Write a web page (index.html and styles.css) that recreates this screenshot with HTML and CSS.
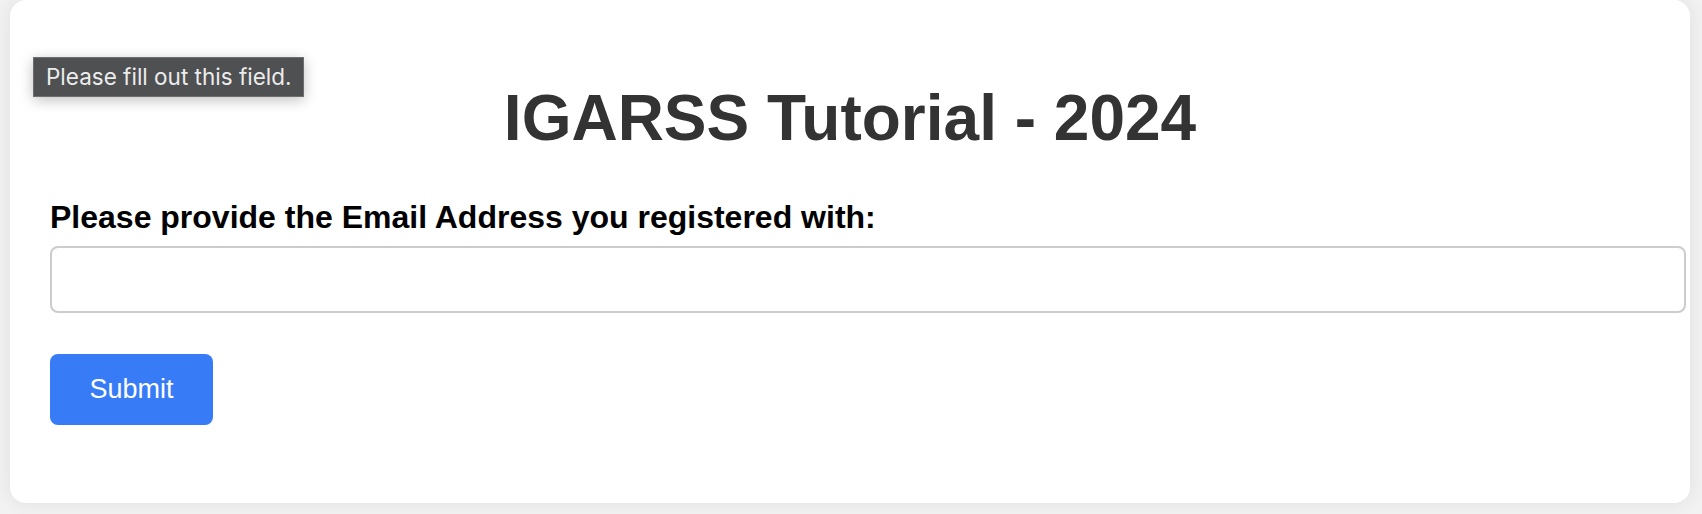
FILE: index.html
```html
<!DOCTYPE html>
<html lang="en">
<head>
<meta charset="utf-8">
<title>IGARSS Tutorial - 2024</title>
<link rel="stylesheet" href="styles.css">
</head>
<body>
<main class="card">
  <h1 class="title">IGARSS Tutorial - 2024</h1>
  <form class="form">
    <label class="label" for="email">Please provide the Email Address you registered with:</label>
    <input class="input" id="email" type="email" required>
    <button class="submit" type="button">Submit</button>
  </form>
</main>
<div class="tooltip">Please fill out this field.</div>
</body>
</html>
```

FILE: styles.css
```css
html, body {
  margin: 0;
  padding: 0;
  background: #f2f2f2;
  height: 100%;
  overflow: hidden;
}
body {
  font-family: "Liberation Sans", Arial, sans-serif;
  padding: 0 12px 0 10px;
}
.card {
  box-sizing: border-box;
  width: 1680px;
  height: 503px;
  background: #ffffff;
  border-radius: 16px;
  box-shadow: 0 0 20px rgba(0, 0, 0, 0.08);
  padding: 40px 40px;
}
.title {
  margin: 41px 0 0;
  font-size: 64px;
  font-weight: bold;
  color: #333333;
  text-align: center;
  line-height: 74px;
}
.form {
  display: flex;
  flex-direction: column;
  align-items: flex-start;
  margin-top: 47px;
}
.label {
  font-size: 32px;
  font-weight: bold;
  color: #000;
  line-height: 31px;
}
.input {
  box-sizing: content-box;
  width: 100%;
  margin-top: 13px;
  height: 31px;
  padding: 16px;
  border: 2px solid #cccccc;
  border-radius: 8px;
  font-size: 26px;
  background: #fff;
  outline: none;
}
.submit {
  margin-top: 41px;
  width: 163px;
  height: 71px;
  border: none;
  border-radius: 8px;
  background: #377bf6;
  color: #ffffff;
  font-family: "Liberation Sans", Arial, sans-serif;
  font-size: 27px;
  padding: 0;
}
.tooltip {
  position: absolute;
  left: 33px;
  top: 57px;
  box-sizing: border-box;
  width: 271px;
  height: 40px;
  background: #4f5052;
  border: 1px solid #6e6e70;
  color: #ececec;
  font-family: Inter, "Noto Sans", sans-serif;
  font-size: 22.5px;
  line-height: 38px;
  padding-left: 12px;
  white-space: nowrap;
  box-shadow: 0 3px 14px rgba(0, 0, 0, 0.25);
}
```
